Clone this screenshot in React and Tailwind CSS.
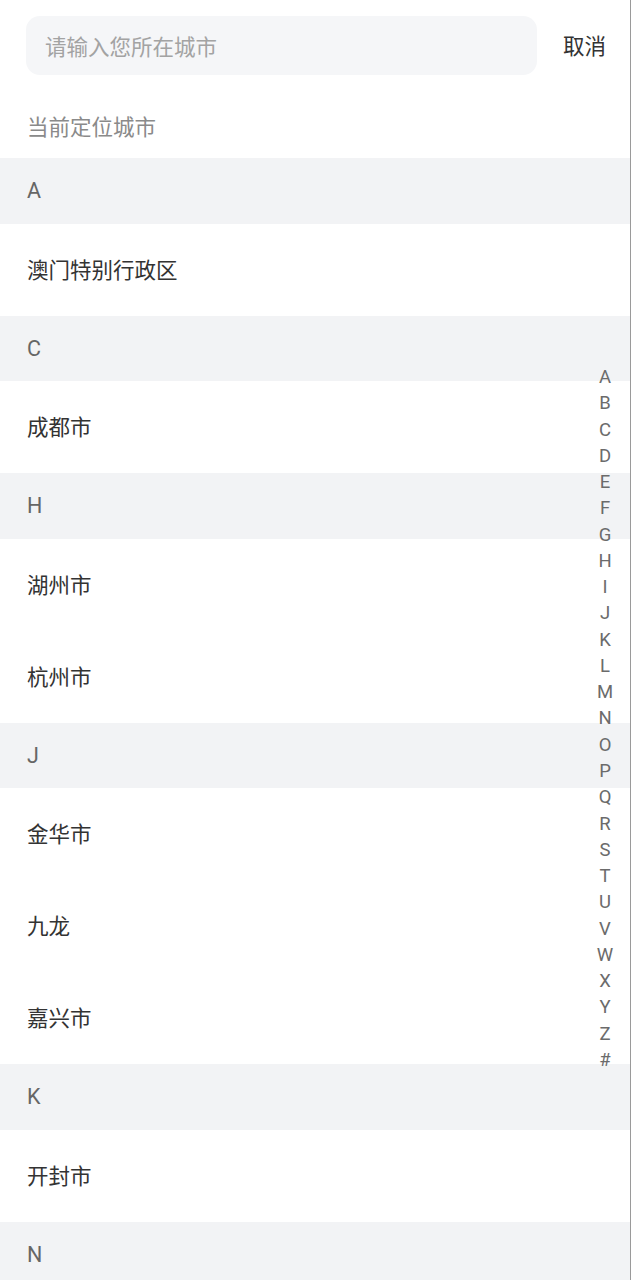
import { useState } from "react";

const sections = [
  { letter: "A", cities: ["澳门特别行政区"] },
  { letter: "C", cities: ["成都市"] },
  { letter: "H", cities: ["湖州市", "杭州市"] },
  { letter: "J", cities: ["金华市", "九龙", "嘉兴市"] },
  { letter: "K", cities: ["开封市"] },
  { letter: "N", cities: [] },
];

const indexLetters = "ABCDEFGHIJKLMNOPQRSTUVWXYZ#".split("");

export default function App() {
  const [query, setQuery] = useState("");

  return (
    <div
      className="relative h-[1280px] w-full overflow-hidden border-r border-[#9a9a9a] bg-white"
      style={{ fontFamily: "Roboto, 'Noto Sans CJK SC', sans-serif" }}
    >
      {/* search bar */}
      <div className="flex items-center pt-4 pl-[26px] pr-[24px]">
        <input
          className="h-[59px] flex-1 rounded-[14px] bg-[#f5f6f8] px-[19px] pt-[3px] text-[21.5px] text-[#333] outline-none placeholder:text-[#a3a3a3]"
          placeholder="请输入您所在城市"
          value={query}
          onChange={(e) => setQuery(e.target.value)}
        />
        <button className="ml-[26px] pt-[3px] text-[21.5px] text-[#333]">取消</button>
      </div>

      <div className="flex h-[83px] items-center pl-[27px] pt-[23px] text-[21.5px] text-[#8a8a8a]">
        当前定位城市
      </div>

      {/* city list */}
      <div>
        {sections.map((s) => (
          <div key={s.letter}>
            <div className="flex h-[65.5px] items-center bg-[#f2f3f5] pl-[27px] pt-[1px] text-[21.5px] text-[#666]">
              {s.letter}
            </div>
            {s.cities.map((c) => (
              <div key={c} className="flex h-[92px] items-center pl-[27px] pt-[3px] text-[21.5px] text-[#333]">
                {c}
              </div>
            ))}
          </div>
        ))}
      </div>

      {/* alphabet index */}
      <div className="absolute right-[13px] top-[364px] flex w-[24px] flex-col items-center">
        {indexLetters.map((l) => (
          <span key={l} className="h-[26.27px] text-[18.5px] leading-[26.27px] text-[#6b6b6b]">
            {l}
          </span>
        ))}
      </div>
    </div>
  );
}
